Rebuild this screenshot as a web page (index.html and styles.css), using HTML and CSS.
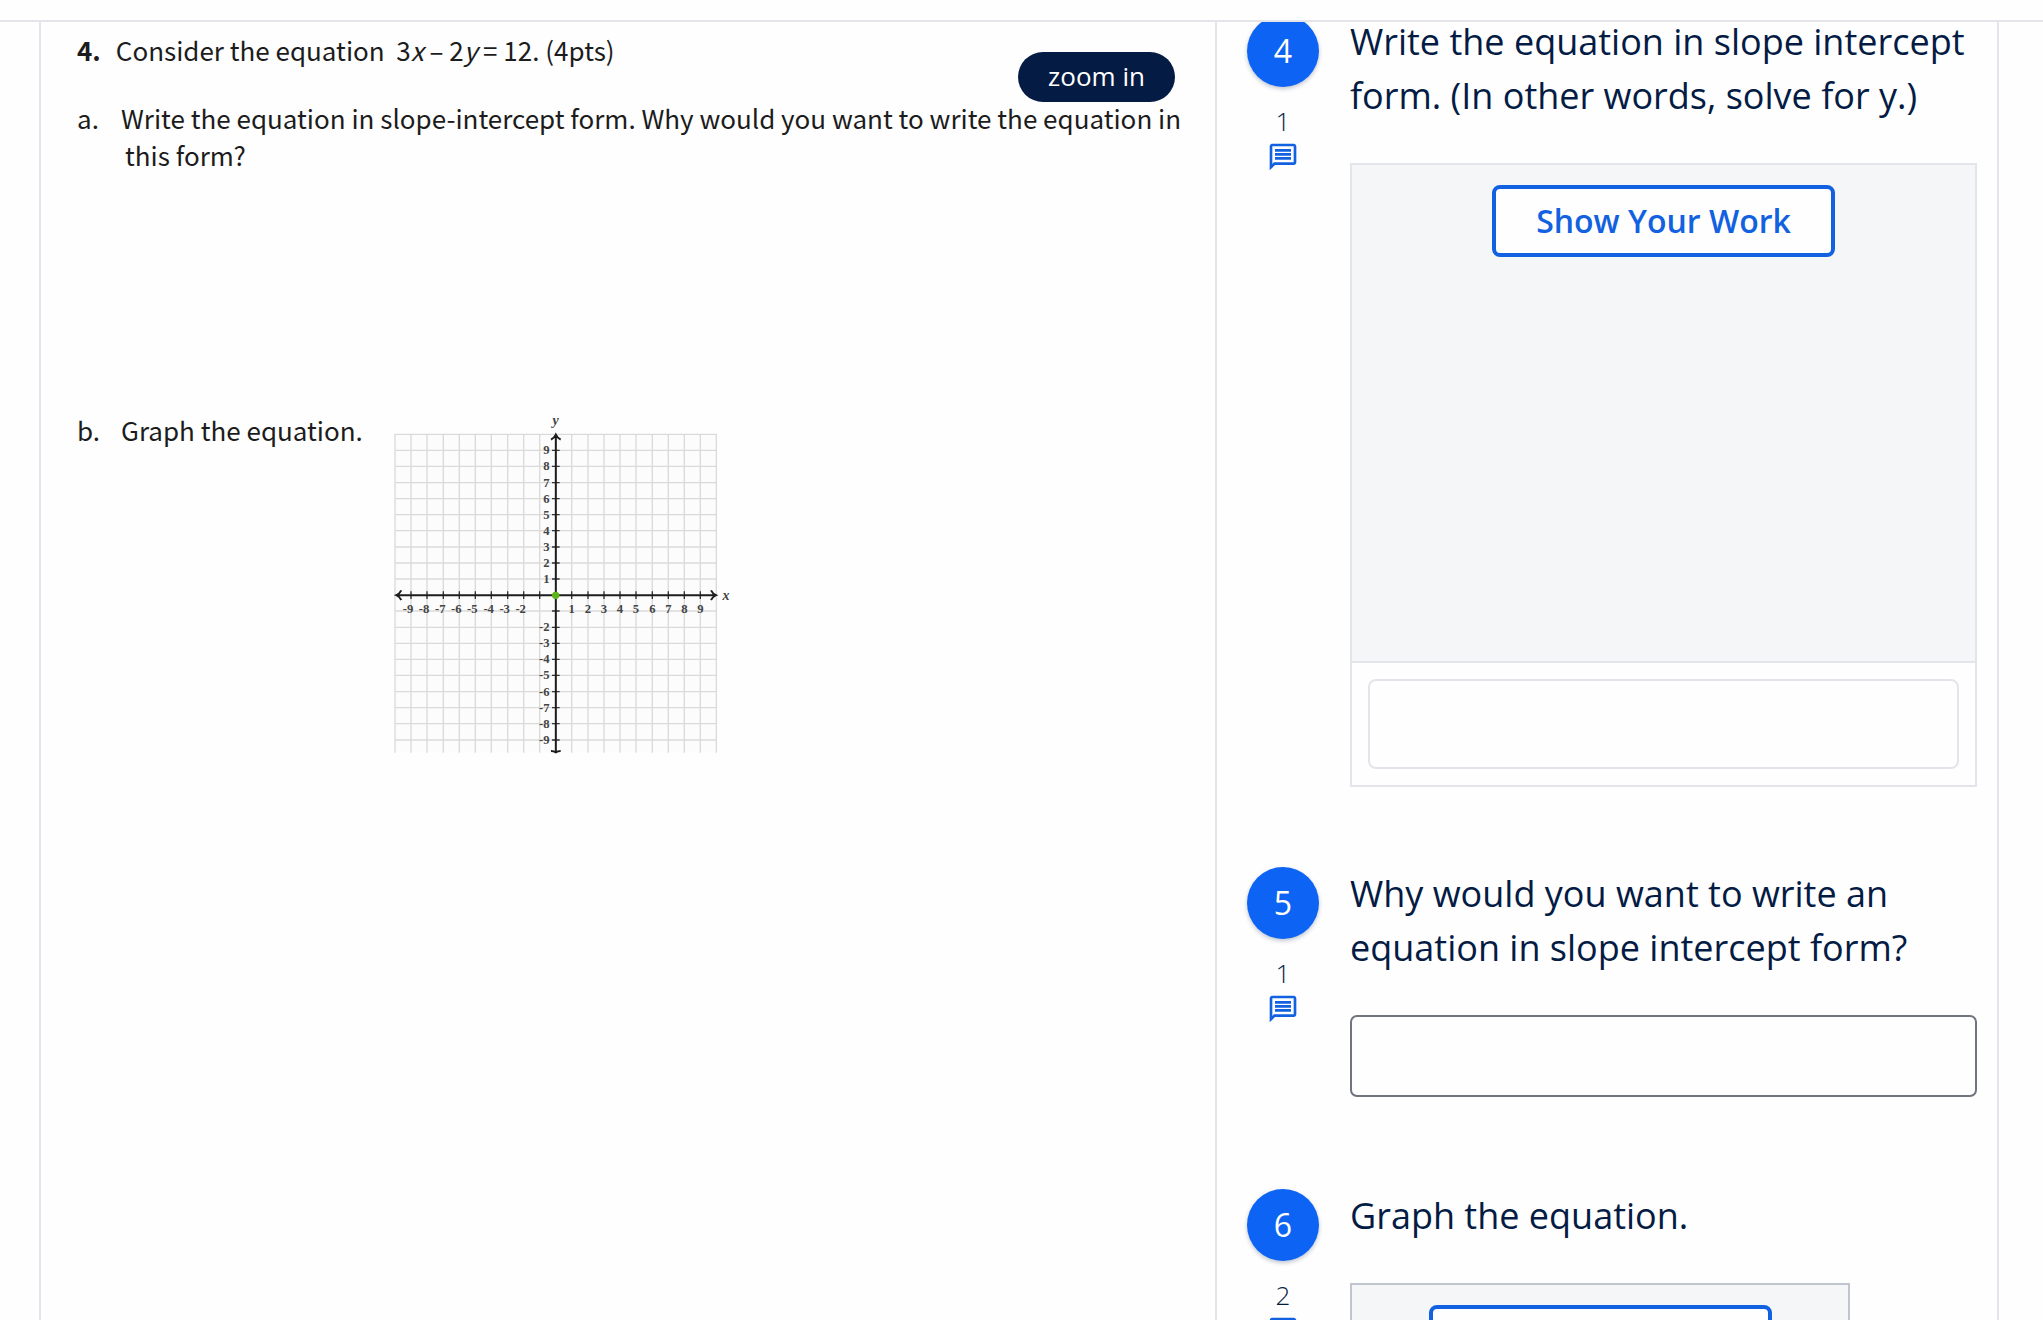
FILE: index.html
```html
<!DOCTYPE html>
<html lang="en">
<head>
<meta charset="utf-8">
<title>Slope-intercept assignment</title>
<link rel="stylesheet" href="styles.css">
</head>
<body>
<svg class="sprite" aria-hidden="true">
  <symbol id="chat" viewBox="0 0 24 24">
    <path d="M4 4h16v12H5.170L4 17.170V4m0-2c-1.100 0-1.990.900-1.990 2L2 22l4-4h14c1.100 0 2-.900 2-2V4c0-1.100-.900-2-2-2H4zm2 10h12v2H6v-2zm0-3h12v2H6V9zm0-3h12v2H6V6z"/>
  </symbol>
</svg>
<main class="workspace">
  <section class="document">
    <button class="zoom" type="button">zoom in</button>
    <h1 class="problem"><b>4.</b><span>Consider the equation&nbsp; 3<i>x</i> – 2<i>y</i> = 12. (4pts)</span></h1>
    <div class="part part-a">
      <span>a.</span>
      <p>Write the equation in slope-intercept form. Why would you want to write the equation in<br>this form?</p>
    </div>
    <div class="part part-b">
      <span>b.</span>
      <p>Graph the equation.</p>
      <svg class="plane" viewBox="0 0 1080 1110" role="img" aria-label="Empty coordinate plane">
        <rect x="45" y="102" width="965" height="956" fill="#fcfcfc"/>
        <path class="grid" d="M45 102v956M93 102v956M141 102v956M190 102v956M238 102v956M286 102v956M334 102v956M383 102v956M431 102v956M479 102v956M575 102v956M624 102v956M672 102v956M720 102v956M768 102v956M817 102v956M865 102v956M913 102v956M961 102v956M1009 102v956M45 103h965M45 151h965M45 199h965M45 248h965M45 296h965M45 344h965M45 392h965M45 441h965M45 489h965M45 537h965M45 633h965M45 682h965M45 730h965M45 778h965M45 826h965M45 875h965M45 923h965M45 971h965M45 1020h965"/>
        <path class="tick" d="M93 574v23M141 574v23M190 574v23M238 574v23M286 574v23M334 574v23M383 574v23M431 574v23M479 574v23M575 574v23M624 574v23M672 574v23M720 574v23M768 574v23M817 574v23M865 574v23M913 574v23M961 574v23M516 151h23M516 199h23M516 248h23M516 296h23M516 344h23M516 392h23M516 441h23M516 489h23M516 537h23M516 633h23M516 682h23M516 730h23M516 778h23M516 826h23M516 875h23M516 923h23M516 971h23M516 1020h23"/>
        <path class="axis" d="M50 585.500H1006M527.500 106V1056M64 571q-5 10-15 14.500q10 4.500 15 14.500M993 571q5 10 15 14.500q-10 4.500-15 14.500M513 119q10-5 14.500-15q4.500 10 14.500 15M513 1053q9 0 14.500 4q5.500-4 14.500-4"/>
        <circle cx="527" cy="586" r="11" fill="#5cb516"/>
        <g class="labels">
          <text x="84" y="640">-9</text><text x="132" y="640">-8</text><text x="181" y="640">-7</text><text x="229" y="640">-6</text><text x="277" y="640">-5</text><text x="326" y="640">-4</text><text x="374" y="640">-3</text><text x="422" y="640">-2</text>
          <text x="575" y="640">1</text><text x="624" y="640">2</text><text x="672" y="640">3</text><text x="720" y="640">4</text><text x="768" y="640">5</text><text x="817" y="640">6</text><text x="865" y="640">7</text><text x="913" y="640">8</text><text x="961" y="640">9</text>
        </g>
        <g class="labels labels-y">
          <text x="509" y="163">9</text><text x="509" y="211">8</text><text x="509" y="260">7</text><text x="509" y="308">6</text><text x="509" y="356">5</text><text x="509" y="404">4</text><text x="509" y="453">3</text><text x="509" y="501">2</text><text x="509" y="549">1</text>
          <text x="509" y="694">-2</text><text x="509" y="742">-3</text><text x="509" y="790">-4</text><text x="509" y="838">-5</text><text x="509" y="887">-6</text><text x="509" y="935">-7</text><text x="509" y="983">-8</text><text x="509" y="1032">-9</text>
        </g>
        <g class="names"><text x="527" y="76">y</text><text x="1038" y="600">x</text></g>
      </svg>
    </div>
  </section>

  <section class="questions">
    <article class="question">
      <div class="meta">
        <span class="number">4</span>
        <span class="points">1</span>
        <button class="comment" type="button" aria-label="Comment on question 4"><svg><use href="#chat"/></svg></button>
      </div>
      <div class="body">
        <label class="prompt" for="answer4">Write the equation in slope intercept form. (In other words, solve for y.)</label>
        <div class="work">
          <div class="canvas"><button class="show" type="button">Show Your Work</button></div>
          <div class="final"><input id="answer4" type="text"></div>
        </div>
      </div>
    </article>

    <article class="question question-text">
      <div class="meta">
        <span class="number">5</span>
        <span class="points">1</span>
        <button class="comment" type="button" aria-label="Comment on question 5"><svg><use href="#chat"/></svg></button>
      </div>
      <div class="body">
        <label class="prompt" for="answer5">Why would you want to write an equation in slope intercept form?</label>
        <textarea id="answer5" class="answer"></textarea>
      </div>
    </article>

    <article class="question">
      <div class="meta">
        <span class="number">6</span>
        <span class="points">2</span>
        <button class="comment" type="button" aria-label="Comment on question 6"><svg><use href="#chat"/></svg></button>
      </div>
      <div class="body">
        <p class="prompt">Graph the equation.</p>
        <div class="work work-graph">
          <div class="canvas"><button class="show" type="button">Show Your Work</button></div>
        </div>
      </div>
    </article>
  </section>
</main>
</body>
</html>
```
FILE: styles.css
```css
* { box-sizing: border-box; }

body {
  margin: 0;
  padding-top: 20px;
  height: 100vh;
  overflow: hidden;
  display: flex;
  flex-direction: column;
  background: #fefefe;
  color: #041b44;
  font-family: "Open Sans", sans-serif;
}

h1, p { margin: 0; font-weight: inherit; }
button, input, textarea { font: inherit; margin: 0; }
.sprite { display: none; }

.workspace {
  flex: 1;
  min-height: 0;
  border-top: 2px solid #e3e5ea;
  padding: 0 44px 0 39px;
  display: grid;
  grid-template-columns: 3fr 2fr;
}

/* Worksheet page */
.document {
  position: relative;
  overflow: hidden;
  border-left: 2px solid #e3e5ea;
  padding: 9px 30px 0 36px;
  color: #1c1c1c;
  font-family: "Noto Sans CJK JP", sans-serif;
  font-weight: 400;
  font-size: 26px;
  line-height: 37px;
  white-space: nowrap;
}
.problem { display: flex; gap: 15px; font-size: 26px; }
.problem b { font-weight: 700; }
.part { display: grid; grid-template-columns: 44px 1fr; }
.part-a { margin-top: 31px; }
.part-a p { padding-left: 4px; text-indent: -4px; }
.part-b { margin-top: 238px; grid-template-columns: 44px 259px 1fr; }
.zoom {
  position: absolute;
  top: 30px;
  right: 40px;
  width: 157px;
  height: 50px;
  padding: 0 0 2px;
  border: 0;
  border-radius: 25px;
  background: #041b44;
  color: #fff;
  font-family: "Open Sans", sans-serif;
  font-size: 26px;
}

.plane { width: 360px; height: 370px; margin-top: -11px; }
.grid { fill: none; stroke: #ccc; stroke-opacity: .700; stroke-width: 4; }
.tick { fill: none; stroke: #333; stroke-width: 4; }
.axis { fill: none; stroke: #1c1c1c; stroke-width: 6; }
.labels, .names { font-family: "Liberation Serif", serif; font-size: 38px; font-weight: 700; fill: #444; text-anchor: middle; }
.labels-y { text-anchor: end; }
.names { font-style: italic; font-size: 42px; }

/* Question list */
.questions {
  overflow: hidden;
  border: solid #e3e5ea;
  border-width: 0 2px;
  padding: 0 20px 0 30px;
}
.question { display: flex; gap: 31px; margin-bottom: 80px; }
.question:first-child { margin-top: -7px; }
.question-text { margin-bottom: 92px; }
.meta { flex: none; width: 72px; display: flex; flex-direction: column; align-items: center; }
.number {
  width: 72px;
  height: 72px;
  border-radius: 50%;
  background: #0d63f3;
  box-shadow: 0 2px 4px rgba(4, 27, 68, .250);
  color: #fff;
  font-size: 32px;
  line-height: 72px;
  text-align: center;
}
.points { margin-top: 14px; font-size: 26px; font-weight: 300; line-height: 40px; }
.comment { border: 0; padding: 0; background: none; display: block; height: 32px; }
.comment svg { display: block; width: 32px; height: 32px; fill: #1261e0; }
.body { flex: 1; min-width: 0; }
.prompt { display: block; font-size: 36px; line-height: 54px; margin-bottom: 40px; }
.work { border: 2px solid #e3e5ea; }
.work-graph { width: 500px; border-color: #bfc4cd; }
.canvas { height: 496px; background: #f4f6f8; padding-top: 20px; text-align: center; }
.show {
  width: 343px;
  height: 72px;
  padding: 0 0 2px;
  border: 4px solid #1261e0;
  border-radius: 8px;
  background: #fefefe;
  color: #1261e0;
  font-size: 32px;
  font-weight: 600;
}
.final { border-top: 2px solid #e3e5ea; padding: 16px; }
.final input { display: block; width: 100%; height: 90px; padding: 0 20px; border: 2px solid #e3e5ea; border-radius: 8px; background: #fefefe; font-size: 32px; }
.answer { display: block; width: 100%; height: 82px; padding: 12px 16px; border: 2px solid #70747e; border-radius: 7px; background: #fefefe; resize: none; font-size: 32px; }
```
